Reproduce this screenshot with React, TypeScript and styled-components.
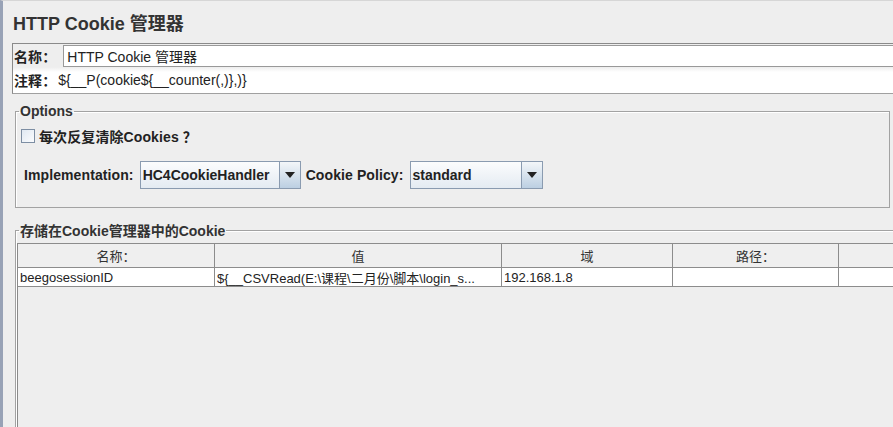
import * as React from 'react'
import styled, { createGlobalStyle } from 'styled-components'

const Global = createGlobalStyle`
  html, body {
    margin: 0;
    padding: 0;
    background: #eeeeee;
  }
  body {
    font-family: "Liberation Sans", Arial, "Noto Sans CJK SC", sans-serif;
    color: #222;
  }
`

const Frame = styled.div`
  height: 427px;
  overflow: hidden;
  box-sizing: border-box;
  border-left: 3px solid #98a2b6;
  border-top: 1px solid #d6d6d6;
  padding-left: 9px;
`

const Title = styled.div`
  font-size: 18px;
  font-weight: bold;
  color: #333;
  height: 42px;
  line-height: 46px;
  padding-left: 1px;
`

const NameBox = styled.div`
  border-top: 1px solid #8a8a8a;
  border-left: 1px solid #8a8a8a;
  border-bottom: 1px solid #a0a0a0;
`

const FieldRow = styled.div<{ $white?: boolean }>`
  display: flex;
  align-items: center;
  height: ${p => (p.$white ? '26px' : '23px')};
  background: ${p => (p.$white ? 'linear-gradient(#ededed, #ffffff 5px, #ffffff)' : 'transparent')};
  padding-left: 1px;
`

const Label = styled.span`
  font-size: 14px;
  font-weight: bold;
  color: #222;
  white-space: nowrap;
  letter-spacing: 0.1px;
`

const TextField = styled.div`
  flex: 1;
  align-self: stretch;
  margin: 1px 0 0 7px;
  border: 1px solid #999;
  border-right: none;
  background: #fff;
  font-size: 14px;
  display: flex;
  align-items: center;
  padding-left: 3px;
  color: #222;
`

const Value = styled.span`
  font-size: 14px;
  color: #222;
  padding-left: 2px;
`

const Group = styled.fieldset<{ $grow?: boolean }>`
  margin: ${p => (p.$grow ? '12px -8px 0 3px' : '9px 3px 0 3px')};
  padding: 0;
  border: 1px solid #a2a2a2;
  box-shadow: inset 1px 1px 0 #fff;
  min-width: 0;
  ${p => p.$grow && 'height: 220px; border-right: none;'}
`

const Legend = styled.legend`
  font-size: 14px;
  font-weight: bold;
  color: #333;
  margin-left: 3px;
  padding: 0 1px;
`

const CheckRow = styled.div`
  display: flex;
  align-items: center;
  margin: 7px 0 0 5px;
  gap: 4px;
`

const Box = styled.span`
  width: 12px;
  height: 12px;
  border: 1px solid #7d8ea3;
  background: linear-gradient(135deg, #dfe8f2, #fbfcfe);
`

const ComboRow = styled.div`
  display: flex;
  align-items: center;
  margin: 15px 0 18px 8px;
`

const Combo = styled.div<{ $w: number }>`
  display: flex;
  width: ${p => p.$w}px;
  height: 26px;
  margin: 0 5px 0 6px;
  border: 1px solid #8a9bb0;
  background: linear-gradient(#fbfcfd, #e4ebf2);
`

const ComboText = styled.span`
  flex: 1;
  font-size: 14px;
  font-weight: bold;
  color: #222;
  display: flex;
  align-items: center;
  padding-left: 2px;
`

const Arrow = styled.span`
  width: 20px;
  border-left: 1px solid #8a9bb0;
  background: linear-gradient(#f3f6f9, #bccfe2);
  display: flex;
  align-items: center;
  justify-content: center;
  &::after {
    content: '';
    border-left: 5px solid transparent;
    border-right: 5px solid transparent;
    border-top: 6px solid #222;
  }
`

const Table = styled.div`
  margin: 3px 0 0 1px;
  border-left: 1px solid #8a8a8a;
  height: 100%;
`

const Grid = styled.div`
  display: grid;
  grid-template-columns: 197px 287px 171px 166px 60px;
`

const HeadCell = styled.div`
  height: 23px;
  border-top: 1px solid #8c8c8c;
  border-right: 1px solid #8c8c8c;
  background: #efefef;
  font-size: 13px;
  color: #333;
  display: flex;
  align-items: center;
  justify-content: center;
`

const Cell = styled.div`
  height: 18px;
  border-top: 1px solid #8c8c8c;
  border-bottom: 1px solid #8c8c8c;
  border-right: 1px solid #8c8c8c;
  background: #fff;
  font-size: 13px;
  color: #222;
  display: flex;
  align-items: center;
  padding-left: 2px;
  overflow: hidden;
  white-space: nowrap;
`

const heads = ['名称：', '值', '域', '路径：', '']
const row = ['beegosessionID', '${__CSVRead(E:\\课程\\二月份\\脚本\\login_s...', '192.168.1.8', '', '']

export default function App() {
  return (
    <Frame>
      <Global />
      <Title>HTTP Cookie 管理器</Title>
      <NameBox>
        <FieldRow>
          <Label>名称：</Label>
          <TextField>HTTP Cookie 管理器</TextField>
        </FieldRow>
        <FieldRow $white>
          <Label>注释：</Label>
          <Value>{'${__P(cookie${__counter(,)},)}'}</Value>
        </FieldRow>
      </NameBox>
      <Group>
        <Legend>Options</Legend>
        <CheckRow>
          <Box />
          <Label>每次反复清除Cookies ？</Label>
        </CheckRow>
        <ComboRow>
          <Label>Implementation:</Label>
          <Combo $w={159}>
            <ComboText>HC4CookieHandler</ComboText>
            <Arrow />
          </Combo>
          <Label>Cookie Policy:</Label>
          <Combo $w={131}>
            <ComboText>standard</ComboText>
            <Arrow />
          </Combo>
        </ComboRow>
      </Group>
      <Group $grow>
        <Legend>存储在Cookie管理器中的Cookie</Legend>
        <Table>
          <Grid>
            {heads.map((h, i) => (
              <HeadCell key={i}>{h}</HeadCell>
            ))}
            {row.map((c, i) => (
              <Cell key={i}>{c}</Cell>
            ))}
          </Grid>
        </Table>
      </Group>
    </Frame>
  )
}
